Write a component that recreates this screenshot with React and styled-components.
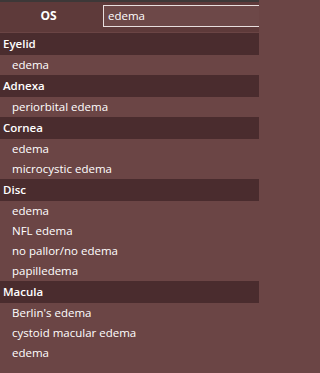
import React from 'react';
import styled, { createGlobalStyle } from 'styled-components';

const GlobalStyle = createGlobalStyle`
  html, body {
    margin: 0;
    padding: 0;
    background: #6b4545;
    overflow: hidden;
  }
  body {
    font-family: "Open Sans", "Noto Sans", "Liberation Sans", sans-serif;
    font-size: 11.5px;
    color: #ffffff;
  }
`;

const Panel = styled.div`
  width: 259px;
  height: 373px;
  display: flex;
  flex-direction: column;
  background: #6b4545;
  border-top: 2px solid #3d3838;
  box-sizing: border-box;
  overflow: hidden;
`;

const Header = styled.div`
  display: flex;
  align-items: flex-start;
  gap: 6px;
  height: 31px;
  flex-shrink: 0;
  padding-top: 3px;
  box-sizing: border-box;
  background: #5e3a3a;
  border-bottom: 1px solid #6a4444;
  overflow: hidden;
`;

const EyeLabel = styled.div`
  width: 97px;
  flex-shrink: 0;
  height: 22px;
  line-height: 22px;
  text-align: center;
  font-weight: 700;
  font-size: 12px;
`;

const Search = styled.input`
  width: 170px;
  height: 22px;
  box-sizing: border-box;
  flex-shrink: 0;
  margin: 0;
  padding: 0 0 1px 4px;
  border: 1px solid #e8dede;
  background: #6d4848;
  color: #ffffff;
  font-family: inherit;
  font-size: 11.5px;
  outline: none;
`;

const List = styled.div`
  display: flex;
  flex-direction: column;
`;

const GroupTitle = styled.div`
  height: 22px;
  line-height: 21px;
  padding-left: 3px;
  background: #4a2c2e;
  font-weight: 600;
`;

const Item = styled.div`
  height: 20px;
  line-height: 20px;
  padding-left: 12px;
  background: #6b4545;
`;

const groups = [
  { name: 'Eyelid', items: ['edema'] },
  { name: 'Adnexa', items: ['periorbital edema'] },
  { name: 'Cornea', items: ['edema', 'microcystic edema'] },
  { name: 'Disc', items: ['edema', 'NFL edema', 'no pallor/no edema', 'papilledema'] },
  { name: 'Macula', items: ["Berlin's edema", 'cystoid macular edema', 'edema'] },
];

export default function App() {
  return (
    <>
      <GlobalStyle />
      <Panel>
        <Header>
          <EyeLabel>OS</EyeLabel>
          <Search defaultValue="edema" />
        </Header>
        <List>
          {groups.map((g) => (
            <React.Fragment key={g.name}>
              <GroupTitle>{g.name}</GroupTitle>
              {g.items.map((it) => (
                <Item key={g.name + it}>{it}</Item>
              ))}
            </React.Fragment>
          ))}
        </List>
      </Panel>
    </>
  );
}
